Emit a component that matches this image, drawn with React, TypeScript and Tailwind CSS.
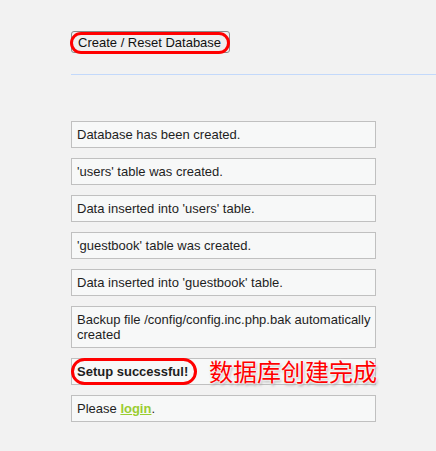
const messages: { text: React.ReactNode; bold?: boolean }[] = [
  { text: "Database has been created." },
  { text: "'users' table was created." },
  { text: "Data inserted into 'users' table." },
  { text: "'guestbook' table was created." },
  { text: "Data inserted into 'guestbook' table." },
  {
    text: (
      <>
        <span className="whitespace-nowrap">Backup file /config/config.inc.php.bak automatically</span>
        <br />
        created
      </>
    ),
  },
];

const Message = ({ children, bold }: { children: React.ReactNode; bold?: boolean }) => (
  <div
    className={`w-[305px] mb-[10px] border border-[#c0c0c0] bg-[#f7f8f8] px-[5px] py-[5px] leading-[15px] ${
      bold ? "font-bold" : ""
    }`}
  >
    {children}
  </div>
);

const App = () => {
  return (
    <div className="min-h-[451px] bg-[#f2f2f2] pl-[71px] pt-[31px] font-['Liberation_Sans',Arial,sans-serif] text-[13px] text-[#1e1e1e]">
      <div className="relative inline-block">
        <button className="flex h-[22px] w-[159px] items-center rounded-[3px] border border-[#8a8a8a] bg-[#efefef] px-[6px] text-[13px] leading-none text-[#111]">
          Create / Reset Database
        </button>
        <div className="pointer-events-none absolute -left-[1px] top-[1px] h-[22px] w-[160px] rounded-full border-[3px] border-[#f00]" />
      </div>

      <div className="mt-[21px] h-px bg-[#c3d9fb]" />

      <div className="mt-[46px]">
        {messages.map((m, i) => (
          <Message key={i}>{m.text}</Message>
        ))}

        <div className="relative">
          <Message bold>Setup successful!</Message>
          <div className="pointer-events-none absolute left-0 top-0 h-[27px] w-[126px] rounded-full border-[3px] border-[#f00]" />
          <div className="absolute left-[138px] top-[0px] whitespace-nowrap font-['Noto_Sans_CJK_SC',sans-serif] text-[24px] leading-[26px] text-[#f00] [text-shadow:0_0_2px_#fff,0_0_2px_#fff,0_0_3px_#fff,1px_2px_3px_#999]">
            数据库创建完成
          </div>
        </div>

        <Message>
          Please{" "}
          <a href="#" className="font-bold text-[#9acd32] underline">
            login
          </a>
          .
        </Message>
      </div>
    </div>
  );
};

export default App;
